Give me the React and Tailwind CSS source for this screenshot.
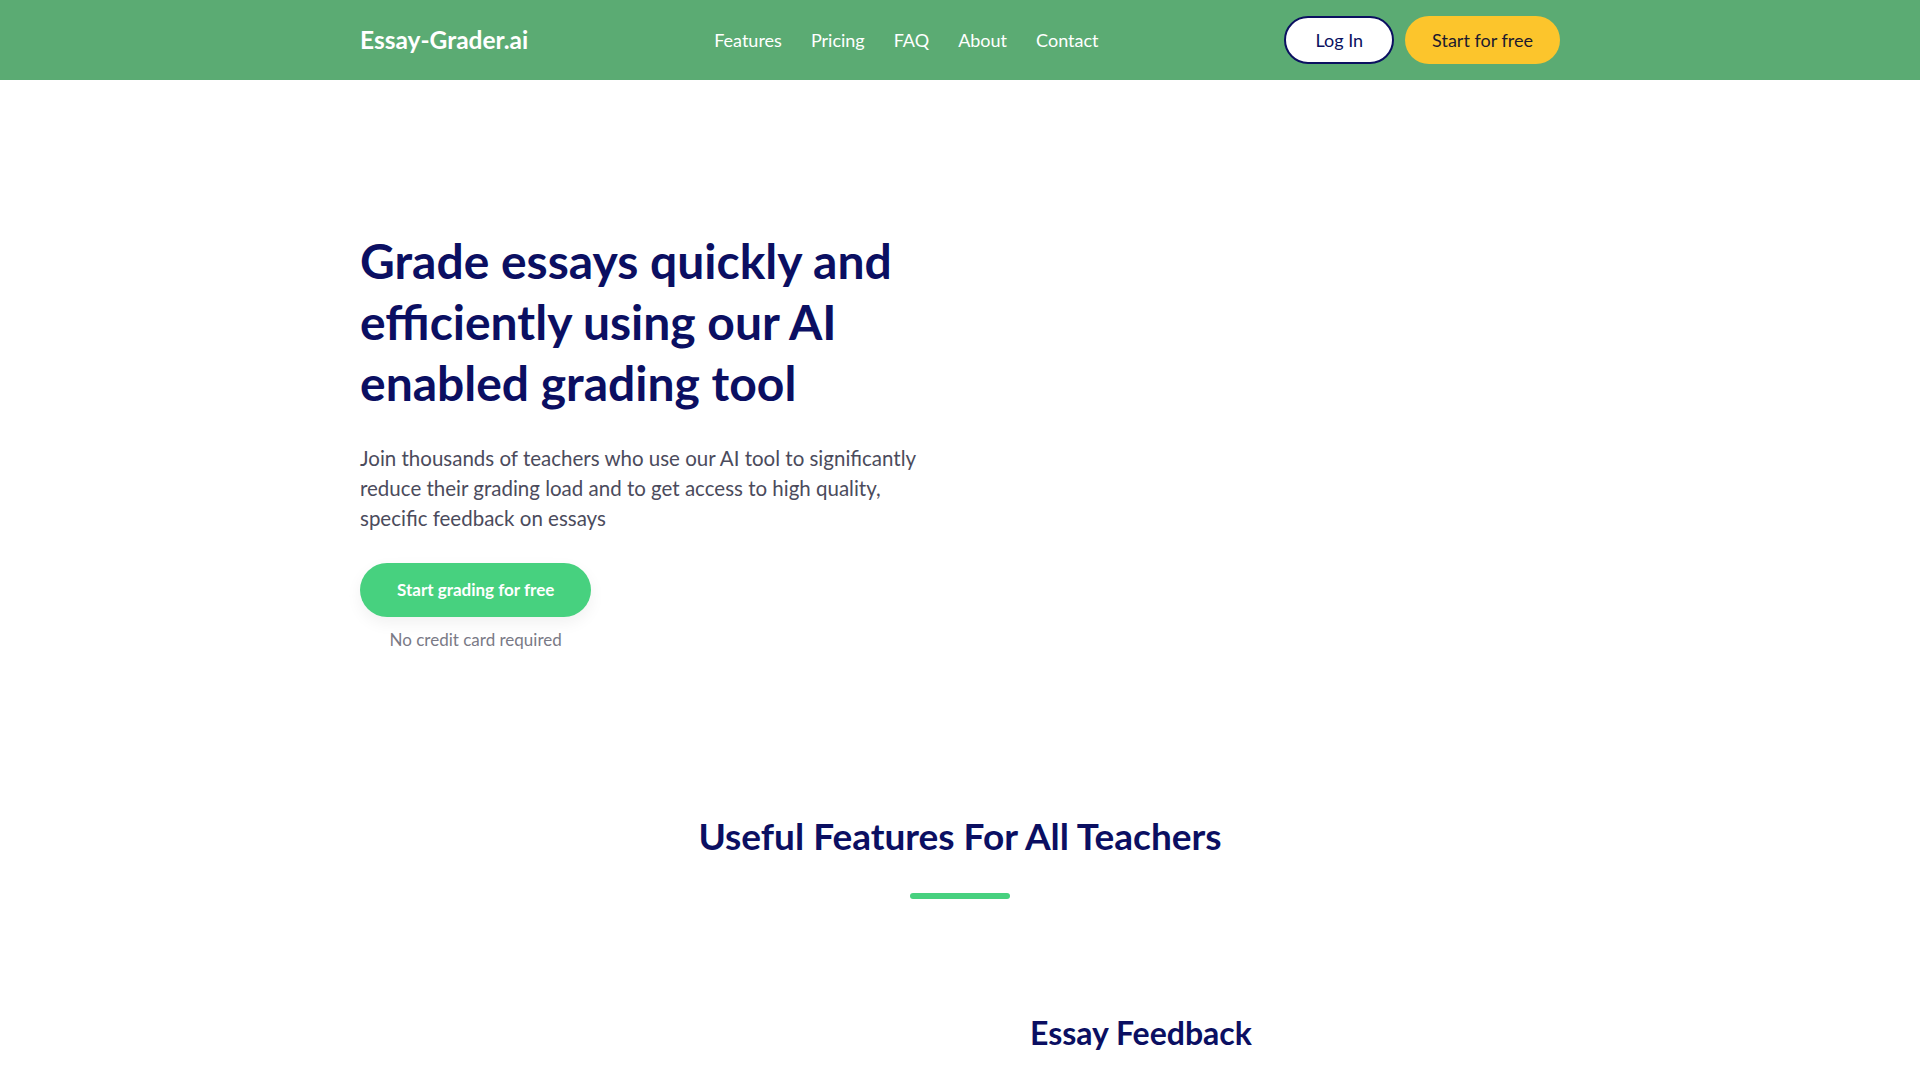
const NAV = ['Features', 'Pricing', 'FAQ', 'About', 'Contact'];

export default function App() {
  return (
    <div className="min-h-screen bg-white font-['Lato','Open_Sans',sans-serif]">
      <header className="h-20 bg-[#5bab73]">
        <div className="mx-auto flex h-full w-[1200px] items-center justify-between">
          <a href="#" className="text-[24.5px] font-bold text-white">Essay-Grader.ai</a>
          <nav className="flex items-center gap-[29px] text-lg text-white">
            {NAV.map((n) => (
              <a key={n} href="#">{n}</a>
            ))}
          </nav>
          <div className="flex items-center gap-[11px]">
            <button className="h-12 rounded-full border-2 border-[#0b1060] bg-white px-[29px] text-lg text-[#0b1060]">
              Log In
            </button>
            <button className="h-12 rounded-full bg-[#fcc52c] px-[27px] text-lg text-[#1c1a2e]">
              Start for free
            </button>
          </div>
        </div>
      </header>

      <section className="mx-auto grid w-[1200px] grid-cols-2 gap-10 pt-[150px]">
        <div>
          <h1 className="text-[48px] font-bold leading-[61px] text-[#0b0f62]">
            Grade essays quickly and efficiently using our AI enabled grading tool
          </h1>
          <p className="mt-[30px] text-[20.5px] leading-[30px] text-[#4b4b5c]">
            Join thousands of teachers who use our AI tool to significantly reduce their grading load and to get access to high quality, specific feedback on essays
          </p>
          <div className="mt-[30px] inline-flex flex-col items-center">
            <button className="h-[54px] rounded-full bg-[#47d17f] px-[37px] text-[17px] font-bold text-white shadow-[0_6px_16px_rgba(0,0,0,0.06)]">
              Start grading for free
            </button>
            <span className="mt-[10px] text-[17px] text-[#7a7a86]">No credit card required</span>
          </div>
        </div>
        <div />
      </section>

      <section className="mx-auto w-[1200px] pt-[161px] text-center">
        <h2 className="text-[37px] font-bold leading-[44px] text-[#0b0f62]">Useful Features For All Teachers</h2>
        <div className="mx-auto mt-[35px] h-[6px] w-[100px] rounded-full bg-[#47d17f]" />
      </section>

      <section className="mx-auto grid w-[1200px] grid-cols-2 pt-[112px]">
        <div />
        <div className="pl-[70px]">
          <h3 className="text-[32px] font-bold leading-[44px] text-[#0b0f62]">Essay Feedback</h3>
        </div>
      </section>
    </div>
  );
}
